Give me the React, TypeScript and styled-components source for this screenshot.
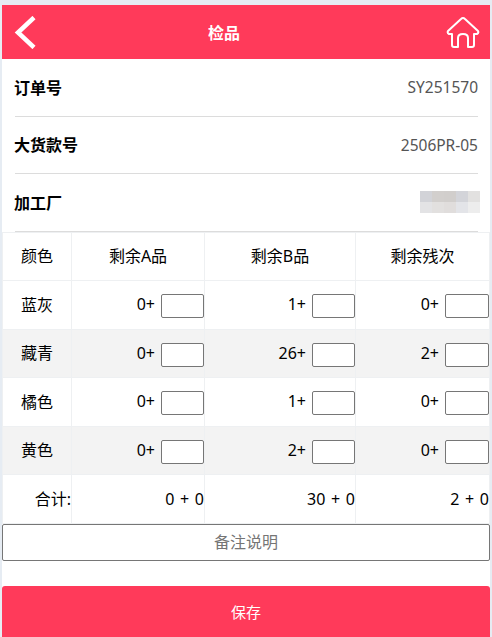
import styled, { createGlobalStyle } from "styled-components";

const GlobalStyle = createGlobalStyle`
  html, body {
    margin: 0;
    padding: 0;
    background: #e6ecf3;
    font-family: "Noto Sans", "Noto Sans CJK SC", sans-serif;
  }
  * {
    box-sizing: border-box;
  }
`;

const rows = [
  { color: "蓝灰", a: 0, b: 1, c: 0 },
  { color: "藏青", a: 0, b: 26, c: 2 },
  { color: "橘色", a: 0, b: 1, c: 0 },
  { color: "黄色", a: 0, b: 2, c: 0 },
];

const mosaic = [
  "#d2d3d8", "#d2cfcd", "#d1cecc", "#d3d4d9", "#e2e1e0",
  "#e3e3e5", "#e2e0df", "#e0dddc", "#e3e4e8", "#ededed",
];

const App = () => {
  return (
    <Page>
      <GlobalStyle />
      <Header>
        <svg width="22" height="33" viewBox="0 0 22 33">
          <path d="M20 1.5 L4 16.5 L20 31.5" fill="none" stroke="#fff" strokeWidth="4.5" />
        </svg>
        <Title>检品</Title>
        <svg width="34" height="33" viewBox="0 0 34 33">
          <path
            d="M17 2 Q18 2 19 3 L32 15 Q33 17 31 18 L28 18 L28 29 Q28 31 26 31 L22 31 L22 22 Q22 18 17 18 Q12 18 12 22 L12 31 L8 31 Q6 31 6 29 L6 18 L3 18 Q1 17 2 15 L15 3 Q16 2 17 2 Z"
            fill="none"
            stroke="#fff"
            strokeWidth="2"
            strokeLinejoin="round"
          />
        </svg>
      </Header>
      <Info>
        <InfoRow>
          <InfoLabel>订单号</InfoLabel>
          <InfoValue>SY251570</InfoValue>
        </InfoRow>
        <InfoRow>
          <InfoLabel>大货款号</InfoLabel>
          <InfoValue>2506PR-05</InfoValue>
        </InfoRow>
        <InfoRow>
          <InfoLabel>加工厂</InfoLabel>
          <Mosaic>
            {mosaic.map((tone, i) => (
              <MosaicCell key={i} $tone={tone} />
            ))}
          </Mosaic>
        </InfoRow>
      </Info>
      <Table>
        <colgroup>
          <col width="69" />
          <col width="133" />
          <col width="151" />
          <col />
        </colgroup>
        <tbody>
          <tr>
            <NameCell>颜色</NameCell>
            <NameCell>剩余A品</NameCell>
            <NameCell>剩余B品</NameCell>
            <NameCell>剩余残次</NameCell>
          </tr>
          {rows.map((row, i) => (
            <BodyRow key={row.color} $shaded={i % 2 === 1}>
              <NameCell>{row.color}</NameCell>
              {[row.a, row.b, row.c].map((left, j) => (
                <QtyCell key={j}>
                  {left}+<QtyInput type="text" />
                </QtyCell>
              ))}
            </BodyRow>
          ))}
          <tr>
            <TotalCell>合计:</TotalCell>
            <TotalCell>0 + 0</TotalCell>
            <TotalCell>30 + 0</TotalCell>
            <TotalCell>2 + 0</TotalCell>
          </tr>
        </tbody>
      </Table>
      <Remark placeholder="备注说明" />
      <SaveButton type="button">保存</SaveButton>
    </Page>
  );
};

const Page = styled.div`
  width: 488px;
  height: 632px;
  margin: 5px 2px 0;
  background: #fff;
  display: flex;
  flex-direction: column;
  overflow: hidden;
`;

const Header = styled.header`
  height: 54px;
  flex: none;
  background: #ff3a5a;
  display: flex;
  align-items: center;
  justify-content: space-between;
  padding: 0 10px 0 12px;
`;

const Title = styled.h1`
  margin: 0;
  color: #fff;
  font-size: 16px;
  font-weight: 700;
  position: absolute;
  left: 0;
  width: 448px;
  text-align: center;
  pointer-events: none;
`;

const Info = styled.section`
  padding: 0 12px 0 13px;
  flex: none;
`;

const InfoRow = styled.div`
  height: 57.5px;
  display: flex;
  align-items: center;
  justify-content: space-between;
  border-bottom: 1px solid #dcdcdc;
`;

const InfoLabel = styled.span`
  font-size: 16px;
  font-weight: 700;
  color: #000;
  margin-left: -1px;
  margin-top: -1px;
`;

const InfoValue = styled.span`
  font-size: 15.5px;
  line-height: 20px;
  color: #555;
`;

const Mosaic = styled.div`
  display: grid;
  grid-template-columns: repeat(5, 12px);
  grid-auto-rows: 11px;
  margin-right: -2px;
`;

const MosaicCell = styled.div<{ $tone: string }>`
  background: ${({ $tone }) => $tone};
`;

const Table = styled.table`
  width: 488px;
  flex: none;
  table-layout: fixed;
  border-collapse: collapse;
  font-size: 16px;
  line-height: 20px;
  color: #000;
`;

const BodyRow = styled.tr<{ $shaded: boolean }>`
  background: ${({ $shaded }) => ($shaded ? "#f3f3f3" : "#fff")};
`;

const NameCell = styled.td`
  height: 48.5px;
  padding: 0;
  text-align: center;
  border: 1px solid #eef0f2;
`;

const QtyCell = styled.td`
  height: 48.5px;
  padding: 3px 0 0;
  text-align: right;
  white-space: nowrap;
  border: 1px solid #eef0f2;
`;

const TotalCell = styled(QtyCell)`
  padding-top: 1px;
  word-spacing: 1.5px;
`;

const QtyInput = styled.input`
  width: 43px;
  height: 24px;
  margin: 0 0 0 6px;
  padding: 0;
  border: 1px solid #767676;
  border-radius: 2px;
  background: #fff;
  vertical-align: middle;
  td:last-child > & {
    width: 44px;
  }
`;

const Remark = styled.textarea`
  display: block;
  width: 488px;
  height: 37px;
  flex: none;
  margin: 0;
  padding: 6px 0;
  border: 1px solid #767676;
  border-radius: 2px;
  text-align: center;
  font-family: inherit;
  font-size: 16px;
  line-height: 22px;
  resize: none;
  outline: none;
  &::placeholder {
    color: #757575;
  }
`;

const SaveButton = styled.button`
  flex: none;
  height: 52px;
  margin-top: 25px;
  border: 0;
  border-radius: 3px 3px 0 0;
  background: #ff3a5a;
  color: #fff;
  font-family: inherit;
  font-size: 15px;
`;

export default App;
